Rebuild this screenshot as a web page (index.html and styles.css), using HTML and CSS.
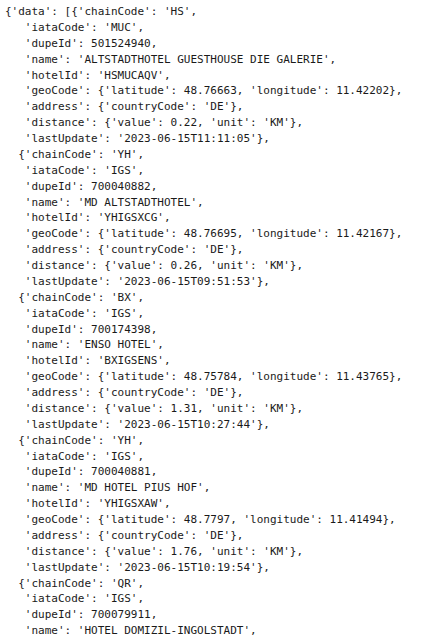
FILE: index.html
```html
<!DOCTYPE html>
<html>
<head>
<meta charset="utf-8">
<link rel="stylesheet" href="styles.css">
</head>
<body>
<pre class="output">{'data': [{'chainCode': 'HS',
   'iataCode': 'MUC',
   'dupeId': 501524940,
   'name': 'ALTSTADTHOTEL GUESTHOUSE DIE GALERIE',
   'hotelId': 'HSMUCAQV',
   'geoCode': {'latitude': 48.76663, 'longitude': 11.42202},
   'address': {'countryCode': 'DE'},
   'distance': {'value': 0.22, 'unit': 'KM'},
   'lastUpdate': '2023-06-15T11:11:05'},
  {'chainCode': 'YH',
   'iataCode': 'IGS',
   'dupeId': 700040882,
   'name': 'MD ALTSTADTHOTEL',
   'hotelId': 'YHIGSXCG',
   'geoCode': {'latitude': 48.76695, 'longitude': 11.42167},
   'address': {'countryCode': 'DE'},
   'distance': {'value': 0.26, 'unit': 'KM'},
   'lastUpdate': '2023-06-15T09:51:53'},
  {'chainCode': 'BX',
   'iataCode': 'IGS',
   'dupeId': 700174398,
   'name': 'ENSO HOTEL',
   'hotelId': 'BXIGSENS',
   'geoCode': {'latitude': 48.75784, 'longitude': 11.43765},
   'address': {'countryCode': 'DE'},
   'distance': {'value': 1.31, 'unit': 'KM'},
   'lastUpdate': '2023-06-15T10:27:44'},
  {'chainCode': 'YH',
   'iataCode': 'IGS',
   'dupeId': 700040881,
   'name': 'MD HOTEL PIUS HOF',
   'hotelId': 'YHIGSXAW',
   'geoCode': {'latitude': 48.7797, 'longitude': 11.41494},
   'address': {'countryCode': 'DE'},
   'distance': {'value': 1.76, 'unit': 'KM'},
   'lastUpdate': '2023-06-15T10:19:54'},
  {'chainCode': 'QR',
   'iataCode': 'IGS',
   'dupeId': 700079911,
   'name': 'HOTEL DOMIZIL-INGOLSTADT',</pre>
</body>
</html>
```
FILE: styles.css
```css
html, body {
  margin: 0;
  padding: 0;
  background: #ffffff;
}
.output {
  margin: 0;
  padding: 4px 0 0 5px;
  font-family: "DejaVu Sans Mono", "Liberation Mono", monospace;
  font-size: 11px;
  line-height: 15.88px;
  color: #1a1a1a;
  white-space: pre;
}
```
